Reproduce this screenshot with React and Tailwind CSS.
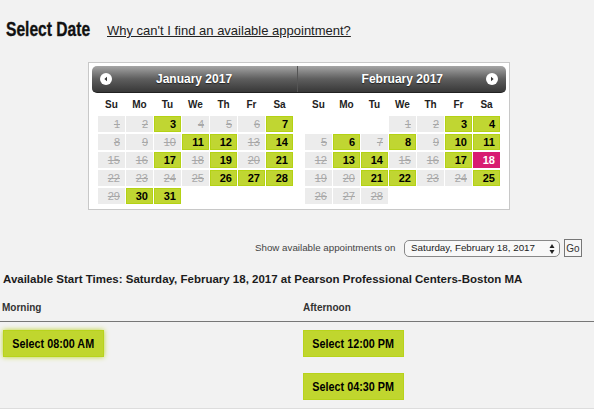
const SANS = "font-['Liberation_Sans',Arial,sans-serif]";
const WEEKDAYS = ["Su", "Mo", "Tu", "We", "Th", "Fr", "Sa"];

const JANUARY = { blanks: 0, days: 31, open: [3, 7, 11, 12, 14, 17, 19, 21, 26, 27, 28, 30, 31] };
const FEBRUARY = { blanks: 3, days: 28, open: [3, 4, 6, 8, 10, 11, 13, 14, 17, 21, 22, 25], picked: 18 };

function Day({ day, month }) {
  if (day === month.picked) {
    return <div className="h-4 border border-[#d81b72] bg-[#d81b72] pr-1 text-right text-[11px] leading-[14px] font-bold text-white">{day}</div>;
  }
  if (month.open.includes(day)) {
    return <div className="h-4 border border-[#b4d214] bg-[#c0d632] pr-1 text-right text-[11px] leading-[14px] font-bold text-black">{day}</div>;
  }
  return <div className="h-4 border border-[#ececec] bg-[#ececec] pr-1 text-right text-[11px] leading-[14px] text-[#a8a8a8] line-through">{day}</div>;
}

function Month({ month, className }) {
  const days = Array.from({ length: month.days }, (_, i) => i + 1);
  return (
    <div className={className}>
      <div className="grid grid-cols-[repeat(7,27px)] gap-x-px">
        {WEEKDAYS.map(d => (
          <div key={d} className="h-[23px] text-center text-[10px] leading-[23px] font-bold text-[#222]">{d}</div>
        ))}
      </div>
      <div className="grid grid-cols-[repeat(7,27px)] gap-x-px gap-y-0.5">
        {Array.from({ length: month.blanks }, (_, i) => <div key={i} />)}
        {days.map(day => <Day key={day} day={day} month={month} />)}
      </div>
    </div>
  );
}

function NavButton({ dir }) {
  return (
    <span className="flex h-3 w-3 items-center justify-center rounded-full bg-white">
      <svg width="6" height="6" viewBox="0 0 6 6">
        <path d={dir === "left" ? "M4 0.8 L1.4 3 L4 5.2 Z" : "M2 0.8 L4.6 3 L2 5.2 Z"} fill="#333" />
      </svg>
    </span>
  );
}

function TimeButton({ label, glow }) {
  return (
    <button className={`flex h-[27px] w-[101px] items-center justify-center border border-[#b8d31c] bg-[#c0d62e] text-[13px] font-bold text-black ${glow ? "shadow-[0_0_5px_#bed52c]" : ""}`}>
      <span className="inline-block origin-center scale-x-[0.83] whitespace-nowrap">{label}</span>
    </button>
  );
}

export default function App() {
  return (
    <div className={`h-[409px] w-[594px] overflow-hidden bg-[#f2f2f2] text-[#222] ${SANS}`}>
      <div className="flex h-[62px] items-start pt-[19px] pl-1.5">
        <h1 className="w-[101px] origin-left scale-x-[0.78] text-[20px] leading-5 font-bold whitespace-nowrap text-[#111] [-webkit-text-stroke:0.3px_#111]">Select Date</h1>
        <a className="mt-[3px] text-[13px] leading-[17px] text-[#222] underline">Why can't I find an available appointment?</a>
      </div>

      <div className="ml-[88px] h-[148px] w-[422px] border border-[#c8c8c8] bg-white p-[3px]">
        <div className="flex h-[27px] w-[414px] rounded-[5px] border-b border-[#222] bg-gradient-to-b from-[#a6a6a6] via-[#5e5e5e] to-[#383838] text-[12px] font-bold text-white">
          <div className="flex w-[206px] items-center border-r border-[#555] pl-[8px]">
            <NavButton dir="left" />
            <span className="ml-[44px] [text-shadow:0_1px_1px_#222]">January 2017</span>
          </div>
          <div className="flex flex-1 items-center justify-end pr-[8px]">
            <span className="mr-[43px] [text-shadow:0_1px_1px_#222]">February 2017</span>
            <NavButton dir="right" />
          </div>
        </div>
        <div className="flex">
          <Month month={JANUARY} className="ml-[6px]" />
          <Month month={FEBRUARY} className="ml-[12px]" />
        </div>
      </div>

      <div className="mt-[29px] flex h-[18px] items-center pl-[255px]">
        <span className="w-[149px] text-[9.75px] whitespace-nowrap text-[#444]">Show available appointments on</span>
        <div className="relative">
          <select className={`block h-[17px] w-[156px] appearance-none rounded-[5px] border border-[#888] bg-[#f8f8f8] pl-1.5 text-[9.8px] text-[#222] ${SANS}`} defaultValue="sat">
            <option value="sat">Saturday, February 18, 2017</option>
          </select>
          <svg className="absolute top-[4px] right-[5px]" width="6" height="10" viewBox="0 0 6 10">
            <path d="M3 0 L5.5 4 L0.5 4 Z M3 10 L5.5 6 L0.5 6 Z" fill="#222" />
          </svg>
        </div>
        <button className="ml-1 h-[18px] w-[18px] border border-[#777] bg-[#f6f6f6] text-[10px] text-[#333]">Go</button>
      </div>

      <h2 className="mt-[14px] pl-[3px] text-[11.5px] leading-[16px] font-bold whitespace-nowrap text-[#1c1c1c]">
        Available Start Times: Saturday, February 18, 2017 at Pearson Professional Centers-Boston MA
      </h2>

      <div className="mt-3.5 flex h-[16px] text-[10px] leading-[14px] font-bold text-[#333]">
        <div className="w-[303px] pl-[2px]">Morning</div>
        <div>Afternoon</div>
      </div>

      <div className="mt-1 flex h-[87px] border-t border-[#777] pt-[8px]">
        <div className="w-[303px] pl-[3px]">
          <TimeButton label="Select 08:00 AM" glow />
        </div>
        <div className="flex flex-col gap-4">
          <TimeButton label="Select 12:00 PM" />
          <TimeButton label="Select 04:30 PM" />
        </div>
      </div>
      <div className="border-t border-[#ddd]" />
    </div>
  );
}
